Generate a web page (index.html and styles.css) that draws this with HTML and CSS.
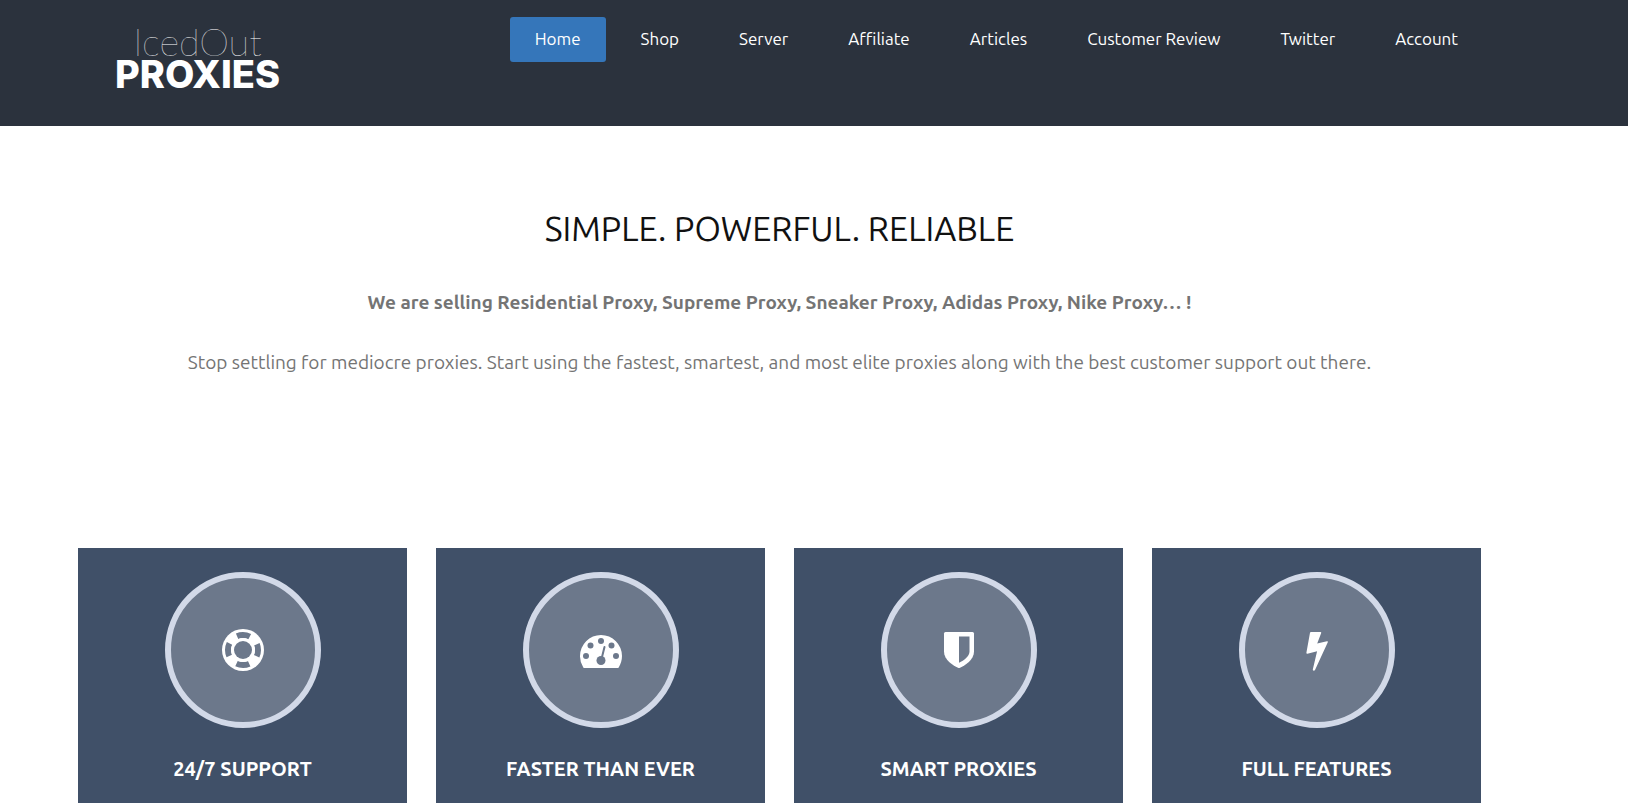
FILE: index.html
```html
<!DOCTYPE html>
<html lang="en">
<head>
  <meta charset="UTF-8" />
  <meta name="viewport" content="width=device-width, initial-scale=1" />
  <title>IcedOut Proxies</title>
  <link rel="stylesheet" href="styles.css">
</head>
<body>

<header class="site-header">
  <a class="logo" href="#">
    <span class="logo-top">IcedOut</span>
    <span class="logo-main">PROXIES</span>
  </a>
  <nav class="menu">
    <a class="active" href="#">Home</a>
    <a href="#">Shop</a>
    <a href="#">Server</a>
    <a href="#">Affiliate</a>
    <a href="#">Articles</a>
    <a href="#">Customer Review</a>
    <a href="#">Twitter</a>
    <a href="#">Account</a>
  </nav>
</header>

<main>
  <section class="intro">
    <h1>SIMPLE. POWERFUL. RELIABLE</h1>
    <p><strong>We are selling Residential Proxy, Supreme Proxy, Sneaker Proxy, Adidas Proxy, Nike Proxy… !</strong></p>
    <p>Stop settling for mediocre proxies. Start using the fastest, smartest, and most elite proxies along with the best customer support out there.</p>
  </section>

  <section class="features">
    <div class="card">
      <div class="circle">
        <svg width="42" height="42" viewBox="0 0 42 42">
          <circle cx="21" cy="21" r="21" fill="#fff" />
          <circle cx="21" cy="21" r="15" fill="none" stroke="#6c788b" stroke-width="6" stroke-dasharray="13 10.56" stroke-dashoffset="6.5" />
          <circle cx="21" cy="21" r="12" fill="#fff" />
          <circle cx="21" cy="21" r="9" fill="#6c788b" />
        </svg>
      </div>
      <h2>24/7 SUPPORT</h2>
    </div>
    <div class="card">
      <div class="circle">
        <svg width="42" height="42" viewBox="0 0 42 42">
          <path fill="#fff" d="M3.3 38.500A21 21 0 0 1 0 27a21 21 0 0 1 42 0c0 4.200-1.200 8-3.300 11.500q-.5.500-1.300.500H4.600q-.8 0-1.300-.5z" />
          <g fill="#6c788b">
            <circle cx="6" cy="27" r="3" />
            <circle cx="10.500" cy="16.500" r="3" />
            <circle cx="21" cy="12" r="3" />
            <circle cx="31.500" cy="16.500" r="3" />
            <circle cx="36" cy="27" r="3" />
            <circle cx="21" cy="31.500" r="4.500" />
          </g>
          <path d="M21.500 30l3-12" stroke="#6c788b" stroke-width="2" stroke-linecap="round" />
        </svg>
      </div>
      <h2>FASTER THAN EVER</h2>
    </div>
    <div class="card">
      <div class="circle">
        <svg width="42" height="42" viewBox="0 0 42 42">
          <path fill="#fff" d="M7.500 3h27q1.500 0 1.500 1.500v18C36 31 27 36.500 22 38.800q-1 .4-2 0C15 36.500 6 31 6 22.500v-18Q6 3 7.500 3z" />
          <path fill="#6c788b" d="M21 7.500h10.500v15c0 5-5.500 8.700-10.500 11.300z" />
        </svg>
      </div>
      <h2>SMART PROXIES</h2>
    </div>
    <div class="card">
      <div class="circle">
        <svg width="42" height="42" viewBox="0 0 42 42">
          <path fill="#fff" d="M15 3h9.500q1 0 .7 1l-4 10.500 9.800-2.300q1.200-.2.800 1L19 41q-.4.800-1.200.8-1.200-.2-1-1.200l4.300-18.300-9.700 2.400q-1.200.1-1-1L14 3.700q.2-.7 1-.7z" />
        </svg>
      </div>
      <h2>FULL FEATURES</h2>
    </div>
  </section>
</main>

</body>
</html>
```

FILE: styles.css
```css
body { font-family: Ubuntu, "Noto Sans", sans-serif; background: #fff; color: #747474; margin: 0; }
a { color: #fff; text-decoration: none; }

.site-header {
  display: flex; justify-content: space-between; align-items: flex-start;
  background: #2b323d; min-height: 126px; box-sizing: border-box;
  padding: 17px 145px 0 115px;
}
.logo { display: flex; flex-direction: column; align-items: center; padding-top: 8px; }
.logo-top { font-family: Lato, sans-serif; font-size: 38px; font-weight: 100; line-height: 32px; color: #fff; }
.logo-main { font-family: Inter, sans-serif; font-size: 38px; font-weight: 800; line-height: 34px; }

.menu { display: flex; gap: 10px; }
.menu a { font-size: 17px; line-height: 43px; padding: 0 25px 2px; border-radius: 3px; white-space: nowrap; }
.menu .active { background: #3576ba; }

main { padding: 0 147px 0 78px; }
.intro { text-align: center; padding-top: 77px; height: 345px; }
.intro h1 { font-size: 34px; font-weight: 400; line-height: 50px; color: #111; margin: 0 0 34px; }
.intro p { font-size: 19px; line-height: 30px; margin: 0 0 30px; }

.features { display: grid; grid-template-columns: repeat(4, 1fr); gap: 29px; }
.card { background: #405068; text-align: center; padding: 24px 20px 19px; }
.circle {
  display: flex; align-items: center; justify-content: center;
  width: 144px; height: 144px; margin: 0 auto 26px;
  border: 6px solid #d2d9e8; border-radius: 50%; background: #6c788b;
}
.card h2 { font-size: 20px; font-weight: 700; line-height: 30px; color: #fff; margin: 0; }
```
